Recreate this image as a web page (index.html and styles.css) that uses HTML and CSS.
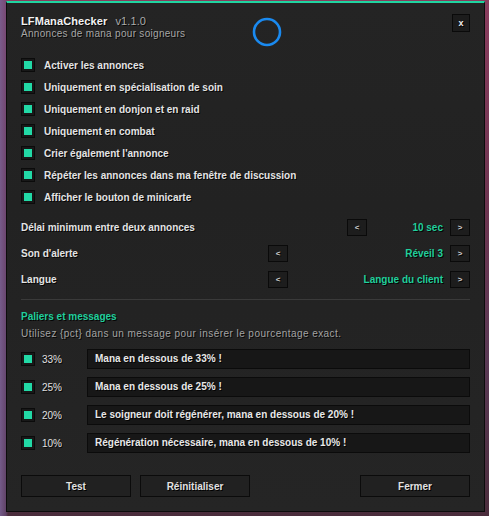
FILE: index.html
```html
<!DOCTYPE html>
<html lang="fr">
<head>
    <meta charset="UTF-8">
    <title>LFManaChecker</title>
    <link rel="stylesheet" href="styles.css">
</head>
<body>
<div class="scene">
    <div class="panel">
        <div class="header">
            <div>
                <div class="title">LFManaChecker <span class="version">v1.1.0</span></div>
                <div class="subtitle">Annonces de mana pour soigneurs</div>
            </div>
            <button class="btn-close">x</button>
        </div>

        <div class="options">
            <div class="option"><span class="check"></span>Activer les annonces</div>
            <div class="option"><span class="check"></span>Uniquement en spécialisation de soin</div>
            <div class="option"><span class="check"></span>Uniquement en donjon et en raid</div>
            <div class="option"><span class="check"></span>Uniquement en combat</div>
            <div class="option"><span class="check"></span>Crier également l'annonce</div>
            <div class="option"><span class="check"></span>Répéter les annonces dans ma fenêtre de discussion</div>
            <div class="option"><span class="check"></span>Afficher le bouton de minicarte</div>
        </div>

        <div class="selectors">
            <div class="selector">
                <span>Délai minimum entre deux annonces</span>
                <div class="picker">
                    <button class="arrow">&lt;</button>
                    <span class="value value-short">10 sec</span>
                    <button class="arrow">&gt;</button>
                </div>
            </div>
            <div class="selector">
                <span>Son d'alerte</span>
                <div class="picker">
                    <button class="arrow">&lt;</button>
                    <span class="value">Réveil 3</span>
                    <button class="arrow">&gt;</button>
                </div>
            </div>
            <div class="selector">
                <span>Langue</span>
                <div class="picker">
                    <button class="arrow">&lt;</button>
                    <span class="value">Langue du client</span>
                    <button class="arrow">&gt;</button>
                </div>
            </div>
        </div>

        <div class="divider"></div>

        <div class="section-title">Paliers et messages</div>
        <div class="hint">Utilisez {pct} dans un message pour insérer le pourcentage exact.</div>

        <div class="tiers">
            <div class="tier"><span class="check"></span><span class="pct">33%</span><div class="message">Mana en dessous de 33% !</div></div>
            <div class="tier"><span class="check"></span><span class="pct">25%</span><div class="message">Mana en dessous de 25% !</div></div>
            <div class="tier"><span class="check"></span><span class="pct">20%</span><div class="message">Le soigneur doit régénérer, mana en dessous de 20% !</div></div>
            <div class="tier"><span class="check"></span><span class="pct">10%</span><div class="message">Régénération nécessaire, mana en dessous de 10% !</div></div>
        </div>

        <div class="footer">
            <button class="btn">Test</button>
            <button class="btn">Réinitialiser</button>
            <button class="btn btn-fermer">Fermer</button>
        </div>
    </div>
    <svg class="spinner" width="32" height="32" viewBox="0 0 32 32">
        <circle cx="16" cy="16" r="13" fill="none" stroke="#1a8af0" stroke-width="2.6"/>
    </svg>
</div>
</body>
</html>
```
FILE: styles.css
```css
body {
    margin: 0;
    font-family: "Liberation Sans", Arial, sans-serif;
    font-size: 10px;
    color: #e4e4e4;
}
.scene {
    position: relative;
    width: 489px;
    height: 516px;
    overflow: hidden;
    background:
        linear-gradient(90deg, rgba(120, 95, 145, 0.9) 0, rgba(110, 80, 130, 0.6) 6px, transparent 8px),
        linear-gradient(180deg, #8a3d5e 0, #6d3550 40%, #5a3a55 70%, #4b2d3c 100%);
}
.panel {
    box-sizing: border-box;
    width: 479px;
    margin: 1px 0 0 6px;
    padding: 11px 14px 14px 14px;
    border: 1px solid #0c0c0c;
    border-top: 2px solid #20d4a0;
    background: linear-gradient(180deg, #242424 0, #222222 40%, #252525 100%);
    text-shadow: 1px 1px 0 rgba(0, 0, 0, 0.85);
}
.header {
    display: flex;
    justify-content: space-between;
    align-items: flex-start;
}
.title {
    font-size: 11px;
    line-height: 14px;
    font-weight: bold;
    color: #f2f2f2;
    letter-spacing: 0.1px;
}
.version {
    font-weight: normal;
    color: #ababab;
    margin-left: 5px;
}
.subtitle {
    line-height: 12px;
    color: #a6a6a6;
    letter-spacing: 0.3px;
}
.btn-close {
    width: 18px;
    height: 18px;
    padding: 0;
    background: #1c1c1c;
    border: 1px solid #0a0a0a;
    color: #f0f0f0;
    font-family: inherit;
    font-size: 9px;
    font-weight: bold;
    line-height: 14px;
    text-shadow: 1px 1px 0 #000;
}
.options {
    margin-top: 14px;
}
.option {
    display: flex;
    align-items: center;
    height: 22px;
    font-weight: bold;
}
.check {
    box-sizing: border-box;
    width: 14px;
    height: 14px;
    padding: 2px;
    margin-right: 9px;
    border: 1px solid #0b0b0b;
    background: #181818;
    flex-shrink: 0;
}
.check::after {
    content: "";
    display: block;
    width: 8px;
    height: 8px;
    background: #22d9a6;
}
.selectors {
    margin-top: 6px;
}
.selector {
    display: flex;
    justify-content: space-between;
    align-items: center;
    height: 26px;
    font-weight: bold;
}
.picker {
    display: flex;
    align-items: center;
}
.arrow {
    width: 20px;
    height: 17px;
    padding: 0;
    background: #1d1d1d;
    border: 1px solid #0a0a0a;
    color: #cfcfcf;
    font-family: inherit;
    font-size: 8px;
    font-weight: bold;
    text-shadow: 1px 1px 0 #000;
}
.value {
    width: 155px;
    padding-right: 7px;
    text-align: right;
    color: #20cf9c;
}
.value-short {
    width: 76px;
}
.divider {
    height: 1px;
    margin-top: 7px;
    background: #3a3a3a;
}
.section-title {
    margin-top: 11px;
    line-height: 12px;
    font-weight: bold;
    color: #20cf9c;
}
.hint {
    margin-top: 5px;
    line-height: 12px;
    color: #a3a3a3;
    letter-spacing: 0.45px;
}
.tiers {
    display: flex;
    flex-direction: column;
    gap: 8px;
    margin-top: 9px;
}
.tier {
    display: flex;
    align-items: center;
    height: 20px;
}
.tier .check {
    margin-right: 7px;
}
.pct {
    width: 45px;
    color: #e0e0e0;
}
.message {
    flex: 1;
    box-sizing: border-box;
    height: 20px;
    padding-left: 7px;
    line-height: 18px;
    background: #171717;
    border: 1px solid #0b0b0b;
    font-weight: bold;
    color: #e8e8e8;
}
.footer {
    display: flex;
    gap: 9px;
    margin-top: 22px;
}
.btn {
    width: 110px;
    height: 22px;
    padding: 0;
    background: #212121;
    border: 1px solid #0b0b0b;
    color: #e2e2e2;
    font-family: inherit;
    font-size: 10px;
    font-weight: bold;
    text-shadow: 1px 1px 0 #000;
}
.btn-fermer {
    margin-left: auto;
}
.spinner {
    position: absolute;
    left: 251px;
    top: 16px;
}
```
